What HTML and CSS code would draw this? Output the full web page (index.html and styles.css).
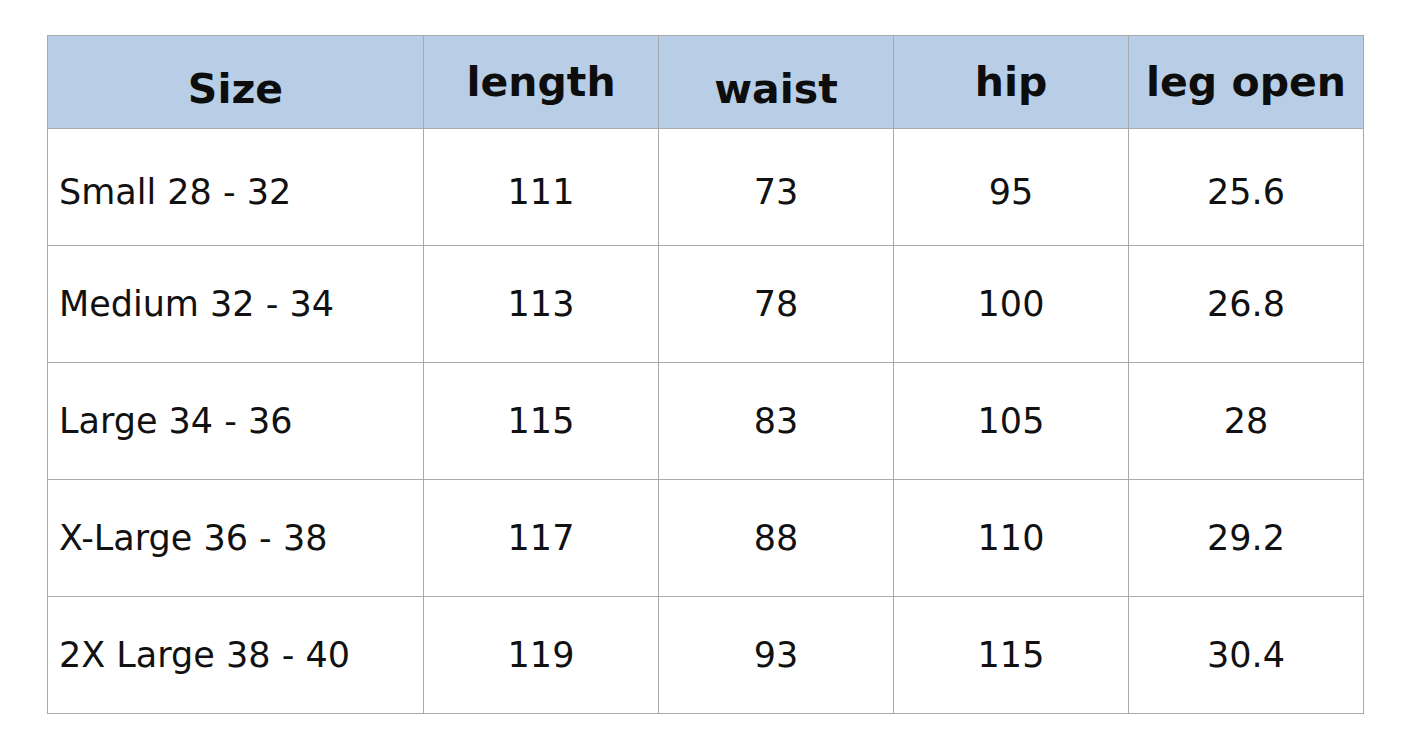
FILE: index.html
```html
<!DOCTYPE html>
<html lang="en">
<head>
<meta charset="utf-8">
<title>Size chart</title>
<link rel="stylesheet" href="styles.css">
</head>
<body>
<main class="page">
  <table class="chart">
    <colgroup>
      <col class="c-size">
      <col class="c-val">
      <col class="c-val">
      <col class="c-val">
      <col class="c-val">
    </colgroup>
    <thead>
      <tr>
        <th class="low">Size</th>
        <th>length</th>
        <th class="low">waist</th>
        <th>hip</th>
        <th>leg open</th>
      </tr>
    </thead>
    <tbody>
      <tr class="r1"><td class="name">Small 28 - 32</td><td>111</td><td>73</td><td>95</td><td>25.6</td></tr>
      <tr><td class="name">Medium 32 - 34</td><td>113</td><td>78</td><td>100</td><td>26.8</td></tr>
      <tr><td class="name">Large 34 - 36</td><td>115</td><td>83</td><td>105</td><td>28</td></tr>
      <tr><td class="name">X-Large 36 - 38</td><td>117</td><td>88</td><td>110</td><td>29.2</td></tr>
      <tr><td class="name">2X Large 38 - 40</td><td>119</td><td>93</td><td>115</td><td>30.4</td></tr>
    </tbody>
  </table>
</main>
</body>
</html>
```
FILE: styles.css
```css
html, body {
  margin: 0;
  padding: 0;
  background: #ffffff;
}
.page {
  padding: 35px 0 0 47px;
}
.chart {
  border-collapse: collapse;
  table-layout: fixed;
  width: 1316px;
  font-family: "DejaVu Sans", "Liberation Sans", sans-serif;
  color: #111111;
}
.c-size { width: 376px; }
.c-val { width: 235px; }
.chart th,
.chart td {
  border: 1px solid #a9a9a9;
  padding: 0;
  text-align: center;
  vertical-align: middle;
}
.chart th {
  height: 78px;
  background: #b8cee6;
  font-size: 41px;
  font-weight: bold;
  color: #0d0d0d;
}
.chart th.low {
  padding-top: 14px;
}
.chart td {
  height: 116px;
  font-size: 35px;
}
.chart td.name {
  text-align: left;
  padding-left: 11px;
}
.chart tr.r1 td {
  height: 106px;
  padding-top: 10px;
}
```
